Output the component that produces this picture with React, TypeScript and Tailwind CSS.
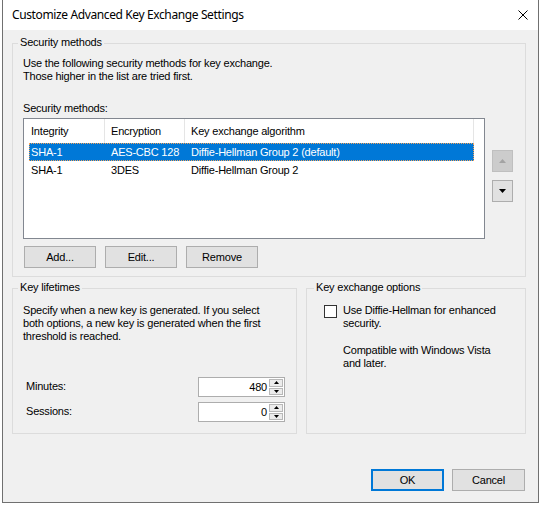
import React from "react";

function GroupLabel({ children, left = "left-[5px]" }: { children: React.ReactNode; left?: string }) {
  return (
    <span className={`absolute top-[-8px] ${left} px-[2px] bg-[#f0f0f0] leading-[13px]`}>{children}</span>
  );
}

function Btn({ children, className = "" }: { children: React.ReactNode; className?: string }) {
  return (
    <div
      className={`w-[72px] h-[22px] flex items-center justify-center bg-[#e1e1e1] border border-[#adadad] ${className}`}
    >
      {children}
    </div>
  );
}

function Spinner({ value }: { value: string }) {
  return (
    <div className="ml-auto w-[87px] h-[20px] bg-white border border-[#adadad] flex items-stretch">
      <div className="flex-1 flex items-center justify-end pr-[1px]">{value}</div>
      <div className="w-[16px] flex flex-col gap-[1px] p-[1px]">
        <div className="flex-1 border border-[#b8b8b8] bg-[#ececec] flex items-center justify-center">
          <svg width="5" height="3" viewBox="0 0 5 3">
            <path d="M0 3 L2.5 0 L5 3 Z" fill="#000" />
          </svg>
        </div>
        <div className="flex-1 border border-[#b8b8b8] bg-[#ececec] flex items-center justify-center">
          <svg width="5" height="3" viewBox="0 0 5 3">
            <path d="M0 0 L5 0 L2.5 3 Z" fill="#000" />
          </svg>
        </div>
      </div>
    </div>
  );
}

export default function App() {
  return (
    <div className="w-[540px] h-[508px] bg-white overflow-hidden font-['Liberation_Sans',Arial,sans-serif] text-[11px] leading-[13px] tracking-[-0.2px] text-black">
      <div className="ml-[2px] w-[537px] h-[503px] border-x border-b border-[#707070] flex flex-col">
        {/* Title bar */}
        <div className="h-[30px] shrink-0 bg-white flex items-center pl-[9px] pr-[10px]">
          <span className="font-['Noto_Sans',sans-serif] text-[12px] leading-[16px] tracking-[-0.38px] text-black">
            Customize Advanced Key Exchange Settings
          </span>
          <svg className="ml-auto" width="10" height="10" viewBox="0 0 10 10">
            <path d="M0.5 0.5 L9.5 9.5 M9.5 0.5 L0.5 9.5" stroke="#000" strokeWidth="1" />
          </svg>
        </div>

        {/* Body */}
        <div className="flex-1 bg-[#f0f0f0] pt-[13px] pl-[9px] pr-[12px] flex flex-col">
          {/* Security methods group */}
          <div className="relative w-[514px] border border-[#dcdcdc] pl-[10px] pt-[13px] pb-[8px]">
            <GroupLabel>Security methods</GroupLabel>
            <div>Use the following security methods for key exchange.</div>
            <div>Those higher in the list are tried first.</div>
            <div className="mt-[19px]">Security methods:</div>
            <div className="mt-[3px] flex items-start">
              <div className="w-[462px] h-[121px] bg-white border border-[#828790]">
                <div className="h-[24px] flex pl-[5px]">
                  <div className="w-[76px] border-r border-[#e5e5e5] pl-[2px] flex items-center">Integrity</div>
                  <div className="w-[80px] border-r border-[#e5e5e5] pl-[6px] flex items-center">Encryption</div>
                  <div className="w-[289px] border-r border-[#e5e5e5] pl-[6px] flex items-center">
                    Key exchange algorithm
                  </div>
                </div>
                <div className="ml-[5px] w-[445px] h-[18px] flex items-center bg-[#0078d7] text-white border border-dotted border-[#f3a35c]">
                  <div className="w-[75px] pl-[1px]">SHA-1</div>
                  <div className="w-[80px] pl-[6px]">AES-CBC 128</div>
                  <div className="pl-[6px]">Diffie-Hellman Group 2 (default)</div>
                </div>
                <div className="ml-[5px] w-[445px] h-[18px] flex items-center">
                  <div className="w-[75px] pl-[2px]">SHA-1</div>
                  <div className="w-[80px] pl-[7px]">3DES</div>
                  <div className="pl-[7px]">Diffie-Hellman Group 2</div>
                </div>
              </div>
              <div className="ml-[7px] mt-[32px] flex flex-col gap-[8px]">
                <div className="w-[21px] h-[22px] bg-[#cccccc] border border-[#bfbfbf] flex items-center justify-center">
                  <svg width="7" height="4" viewBox="0 0 7 4">
                    <path d="M0 4 L3.5 0 L7 4 Z" fill="#a3a3a3" />
                  </svg>
                </div>
                <div className="w-[21px] h-[22px] bg-[#e1e1e1] border border-[#adadad] flex items-center justify-center">
                  <svg width="7" height="4" viewBox="0 0 7 4">
                    <path d="M0 0 L7 0 L3.5 4 Z" fill="#000" />
                  </svg>
                </div>
              </div>
            </div>
            <div className="mt-[7px] ml-[1px] flex gap-[9px]">
              <Btn>Add...</Btn>
              <Btn>Edit...</Btn>
              <Btn>Remove</Btn>
            </div>
          </div>

          {/* Lower groups */}
          <div className="mt-[11px] flex gap-[9px]">
            <div className="relative w-[285px] h-[146px] border border-[#dcdcdc] pl-[10px] pr-[11px] pt-[15px]">
              <GroupLabel>Key lifetimes</GroupLabel>
              <div>
                Specify when a new key is generated. If you select
                <br />
                both options, a new key is generated when the first
                <br />
                threshold is reached.
              </div>
              <div className="mt-[34px] flex flex-col gap-[5px]">
                <div className="h-[20px] flex items-center">
                  <span className="pl-[3px] pb-[2px]">Minutes:</span>
                  <Spinner value="480" />
                </div>
                <div className="h-[20px] flex items-center">
                  <span className="pl-[3px] pb-[2px]">Sessions:</span>
                  <Spinner value="0" />
                </div>
              </div>
            </div>

            <div className="relative w-[220px] h-[146px] border border-[#dcdcdc] pl-[17px] pt-[15px]">
              <GroupLabel left="left-[7px]">Key exchange options</GroupLabel>
              <div className="flex items-start gap-[6px]">
                <div className="mt-[1px] w-[13px] h-[13px] shrink-0 bg-white border border-[#333333]" />
                <div>
                  <div>
                    Use Diffie-Hellman for enhanced
                    <br />
                    security.
                  </div>
                  <div className="mt-[14px]">
                    Compatible with Windows Vista
                    <br />
                    and later.
                  </div>
                </div>
              </div>
            </div>
          </div>

          {/* Dialog buttons */}
          <div className="mt-[35px] flex justify-end gap-[8px] pr-[1px]">
            <div className="w-[73px] h-[22px] flex items-center justify-center bg-[#e1e1e1] border-2 border-[#0078d7]">
              OK
            </div>
            <div className="w-[73px] h-[22px] flex items-center justify-center bg-[#e1e1e1] border border-[#adadad]">
              Cancel
            </div>
          </div>
        </div>
      </div>
    </div>
  );
}
